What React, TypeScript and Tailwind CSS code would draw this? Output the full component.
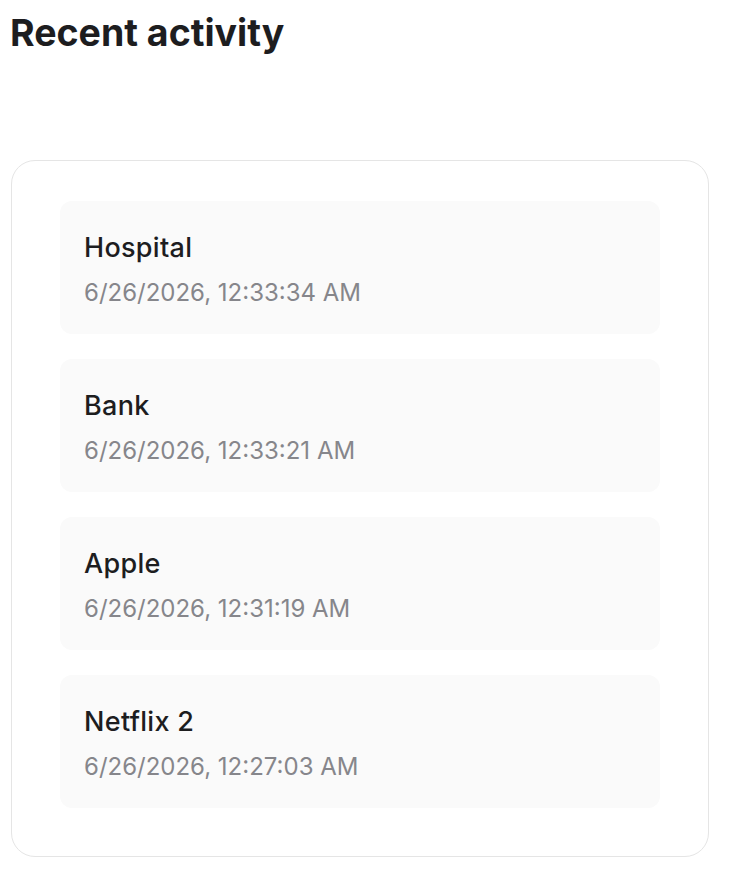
const activity = [
	{ name: "Hospital", time: "6/26/2026, 12:33:34 AM" },
	{ name: "Bank", time: "6/26/2026, 12:33:21 AM" },
	{ name: "Apple", time: "6/26/2026, 12:31:19 AM" },
	{ name: "Netflix 2", time: "6/26/2026, 12:27:03 AM" },
]

export default function App() {
	return (
		<div className="min-h-screen bg-white px-[10px] pt-[10px] font-['Inter',_'Noto_Sans',_sans-serif]">
			<h1 className="text-[37.5px] font-bold leading-[45px] text-[#1d1d1f]">Recent activity</h1>
			<div className="mt-[105px] ml-px w-[698px] rounded-[24px] border border-[#e5e5e5] px-12 pt-10 pb-12">
				<div className="flex flex-col gap-[25px]">
					{activity.map((item) => (
						<div key={item.name} className="flex h-[133px] flex-col justify-center rounded-xl bg-[#fafafa] px-6 pt-[4px]">
							<p className="text-[27px] font-medium leading-[32px] tracking-[0.3px] text-[#1d1d1f]">{item.name}</p>
							<p className="mt-[15px] text-[24px] leading-[28px] text-[#86868b]">{item.time}</p>
						</div>
					))}
				</div>
			</div>
		</div>
	)
}
